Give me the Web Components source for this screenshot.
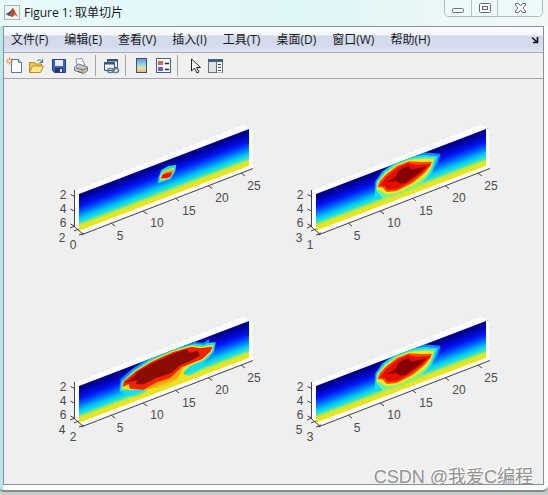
<!DOCTYPE html>
<html lang="zh-CN">
<head>
<meta charset="utf-8">
<title>Figure 1: 取单切片</title>
<style>
html,body{margin:0;height:100%}
body{background:#c9cbcb;font-family:"Open Sans","Noto Sans CJK SC",sans-serif;font-size:12px;color:#16191d}
</style>
</head>
<body>
<figure-window>
  <title-bar slot="title">Figure 1: 取单切片</title-bar>
  <menu-bar slot="menu">
    <menu-entry>文件(F)</menu-entry><menu-entry>编辑(E)</menu-entry><menu-entry>查看(V)</menu-entry><menu-entry>插入(I)</menu-entry><menu-entry>工具(T)</menu-entry><menu-entry>桌面(D)</menu-entry><menu-entry>窗口(W)</menu-entry><menu-entry>帮助(H)</menu-entry>
  </menu-bar>
  <tool-bar slot="tools"></tool-bar>
  <slice-plot blob="small" far="2" near="0"></slice-plot>
  <slice-plot blob="medium" far="3" near="1"></slice-plot>
  <slice-plot blob="large" far="4" near="2"></slice-plot>
  <slice-plot blob="medium" far="5" near="3"></slice-plot>
  <span slot="mark">CSDN @我爱C编程</span>
</figure-window>
<script>
const define = (name, html, setup) => customElements.define(name, class extends HTMLElement {
  constructor() {
    super();
    this.attachShadow({mode: 'open'}).innerHTML = typeof html === 'function' ? html(this) : html;
    if (setup) setup(this);
  }
});

define('figure-window', `<style>
:host{display:flex;flex-direction:column;box-sizing:border-box;height:calc(100vh - 3px);padding:0 4px 5px 3px;
 background:linear-gradient(90deg,#b9e6e8 0,#b9e6e8 3px,#fafcfc 4px);border-bottom:2px solid #868a8a;border-radius:0 0 6px 4px;position:relative}
.client{flex:1;display:flex;flex-direction:column;border:1px solid #8b9092;background:#efefef;min-height:0}
.grid{flex:1;display:grid;grid-template-columns:1fr 1fr;align-content:start;padding:21px 28px 0 37px}
.mark{position:absolute;right:15px;bottom:1px;font:18px/24px "Liberation Sans","Noto Sans CJK SC",sans-serif;color:#929292;text-shadow:-1px -1px 0 #fff;white-space:nowrap}
</style>
<slot name="title"></slot>
<div class="client"><slot name="menu"></slot><slot name="tools"></slot><main class="grid"><slot></slot></main></div>
<div class="mark"><slot name="mark"></slot></div>`);

define('title-bar', `<style>
:host{display:flex;align-items:flex-start;height:26px;margin:0 -4px 0 -3px;background:linear-gradient(90deg,#e9fbfb,#dff6f9 55%,#eaf8f6 80%,#f1f8f6)}
.logo{margin:5px 4px 0 4px;flex:none}
h1{margin:4px 0 0;font:inherit;line-height:18px;flex:1}
.controls{display:flex;height:17px;box-sizing:border-box;border:1px solid #a9bdbf;border-top:0;border-radius:0 0 5px 5px;margin-right:5px}
button{border:0;padding:0;margin:0;background:#edf8f8;display:flex;justify-content:center;align-items:center;width:26px}
button+button{border-left:1px solid #b3c5c7}
button:first-child{border-radius:0 0 0 4px}
button:last-child{width:45px;border-radius:0 0 4px 0}
</style>
<svg class="logo" width="16" height="15" viewBox="0 0 16 15"><rect x=".5" y=".5" width="15" height="14" fill="#f0f4f5" stroke="#abb5b9"/><path d="M1.500 9 6 6.500 9 3 8 11 5 11Z" fill="#3378a5"/><path d="M4 10 6.500 6 9 3 8 12 6 10Z" fill="#5b4256"/><path d="M9 3 11 6 14 12 11 10 8 12 6 10Z" fill="#d8612c"/><path d="M9 3 10 7 9 11 8 12Z" fill="#a63518"/></svg>
<h1><slot></slot></h1>
<div class="controls">
<button aria-label="最小化"><svg width="12" height="15" viewBox="0 0 12 15"><rect x=".5" y="7.500" width="11" height="4" rx="1" fill="#fff" stroke="#6b7578"/></svg></button>
<button aria-label="最大化"><svg width="12" height="15" viewBox="0 0 12 15"><rect x=".5" y="2.500" width="11" height="9" rx="1" fill="#fff" stroke="#636c70"/><rect x="3.500" y="5.500" width="5" height="3" fill="#e7f2f2" stroke="#636c70"/></svg></button>
<button aria-label="关闭"><svg width="13" height="15" viewBox="0 0 13 15"><path d="M1.500 2.500H4.500L6.500 5 8.500 2.500H11.500V4L9 7 11.500 10V11.500H8.500L6.500 9 4.500 11.500H1.500V10L4 7 1.500 4Z" fill="#fff" stroke="#636c70"/></svg></button>
</div>`);

define('menu-bar', `<style>
:host{display:flex;align-items:center;height:26px;box-sizing:border-box;padding:0 4px 0 7px;gap:16px;border-bottom:1px solid #a7a9ae;
background:linear-gradient(#fafcff 0,#f3f6fb 8px,#d3daea 9px,#d5dbed 19px,#dfe4f2 25px)}
.dock{border:0;background:none;padding:0;margin-left:auto;display:flex}
</style><slot></slot>
<button class="dock" aria-label="停靠"><svg width="8" height="8" viewBox="0 0 8 8"><path d="M1 1.500 5.500 5.500M6.500 1V6.500H2" fill="none" stroke="#111" stroke-width="1.600"/></svg></button>`);

define('menu-entry', `<style>:host{display:block}button{font:inherit;color:inherit;line-height:18px;border:0;padding:0;background:none;white-space:nowrap}</style><button><slot></slot></button>`);

const icons = {
 '新建': '<path d="M4.500 1.500h7l3 3v10h-10z" fill="#fbfdff" stroke="#55779f"/><path d="M11.500 1.500v3h3" fill="#c9daef" stroke="#55779f"/><path d="M2.500 -.5v7M-1 3h7M0 .5l5 5M5 .5l-5 5" stroke="#e0793d"/><circle cx="2.500" cy="3" r="1.500" fill="#fff0b0"/>',
 '打开': '<path d="M.5 14.500v-10h5l1 1.500h6v3" fill="#eec455" stroke="#b3872c"/><path d="m.5 14.500 3-6.500h11l-3 6.500z" fill="#ffe583" stroke="#b98d2f"/><path d="M8 3q3-3 5 1M13.500 1.500v3h-3" fill="none" stroke="#486b90"/>',
 '保存': '<path d="M1.500 1.500h13v13h-11l-2-2z" fill="#3e60c0" stroke="#263f8c"/><path d="M4 2h8v6H4z" fill="#e3edfc"/><path d="M4 10h8v4H4z" fill="#23346f"/><path d="M9 11h2v3H9z" fill="#e8edf8"/>',
 '打印': '<path d="m4 7-1-6 6-.5 3 7z" fill="#f8fbff" stroke="#8a969f"/><path d="m1.500 9 4-3 9 3v4l-4 2.500-9-3z" fill="#c6c9cc" stroke="#777d82"/><path d="m3 10 8 2 3-2M4 13l6 2" fill="none" stroke="#646a6e"/><path d="M8 13h3" stroke="#d3b53d" stroke-width="2"/>',
 '链接绘图': '<path d="M4.500 1.500h10v8h-10z" fill="#e9f1f8" stroke="#3a5478"/><path d="M4 2.500h11" stroke="#36527d" stroke-width="2"/><path d="M1.500 4.500h10v8h-10z" fill="#eef4f9" stroke="#3a5478"/><path d="M1 5.500h11" stroke="#36527d" stroke-width="2"/><rect x="4.500" y="10.500" width="6" height="4" rx="2" fill="none" stroke="#667f99" stroke-width="1.500"/><rect x="9.500" y="10.500" width="6" height="4" rx="2" fill="none" stroke="#667f99" stroke-width="1.500"/>',
 '插入颜色栏': '<defs><linearGradient id="bar" x2="0" y2="1"><stop stop-color="#7c8ad6"/><stop offset=".4" stop-color="#86d4e0"/><stop offset=".7" stop-color="#ebe29a"/><stop offset="1" stop-color="#e9ad70"/></linearGradient></defs><rect x="3.500" y=".5" width="10" height="14" fill="url(#bar)" stroke="#36527d"/>',
 '插入图例': '<rect x="1.500" y=".5" width="14" height="14" fill="#fafcff" stroke="#42608a"/><path d="M3 3h5v4H3z" fill="#e2604e"/><path d="M3 9h5v4H3z" fill="#5a6bd8"/><path d="M10 5.500h4M10 11.500h4" stroke="#222" stroke-width="1.500"/>',
 '编辑绘图': '<path d="M6.500 1v12l3-3 2.500 5 2-1-2.500-4.500h4z" fill="#fff" stroke="#222"/>',
 '属性检查器': '<rect x="1.500" y="1.500" width="14" height="13" fill="#e0e3e5" stroke="#68747e"/><path d="M1 2.500h15" stroke="#45617e" stroke-width="3"/><path d="M9.500 4v11" stroke="#68747e"/><path d="M10 4.500h5v10h-5z" fill="#fff"/><path d="M11 6.500h3M11 9.500h3M11 12.500h3" stroke="#444"/>'
};
const tool = n => `<button aria-label="${n}" title="${n}"><svg width="16" height="16" viewBox="0 0 16 16">${icons[n]}</svg></button>`;
define('tool-bar', `<style>
:host{display:flex;align-items:center;height:26px;box-sizing:border-box;border-bottom:1px solid #a5a5a5;background:#f0f0f0}
button{width:22px;height:22px;padding:0;border:0;background:none;display:flex;align-items:center;justify-content:center}
i{width:1px;height:21px;background:#a4a4a4;margin:0 4px 0 3px}
svg{overflow:visible}
</style>${tool('新建')}${tool('打开')}${tool('保存')}${tool('打印')}<i></i>${tool('链接绘图')}<i></i>${tool('插入颜色栏')}${tool('插入图例')}<i></i>${tool('编辑绘图')}${tool('属性检查器')}`);

// Temperature contours, from the coolest ring to the core
const blobs = {
 small: {at: 'translate(-1 15)', soft: 1, rings: [
  ['#19d9e8','354 205 356 187 364 165 385 153 409 149 406 168 392 192 370 200'],
  ['#b8f050','359 197 361 181 372 167 404 157 399 175 386 192'],
  ['#ff9a00','361 192 366 179 378 168 401 164 396 180 384 191'],
  ['#e31500','364 189 369 178 396 171 392 184 380 189']]},
 medium: {at: 'translate(2 15)', soft: 2, rings: [
  ['#0d84ff','285 228 284 202 305 170 345 140 385 122 430 112 482 116 476 140 462 165 430 190 290 235'],
  ['#19dfe6','284 240 289 200 310 170 345 144 385 127 430 120 474 123 466 148 454 178 420 210 360 240 290 255'],
  ['#70ee98','289 226 291 202 315 172 350 147 390 132 430 127 466 127 457 158 444 184 420 212 360 238 310 254 300 240'],
  ['#f4ee16','290 224 294 201 318 173 350 149 390 135 430 132 461 133 453 158 438 182 404 209 350 233 318 238 304 228'],
  ['#ff4b00','293 216 299 199 320 176 352 152 388 139 424 141 456 140 450 155 431 177 397 204 350 228 320 231 309 218'],
  ['#e71100','298 212 320 184 352 158 384 143 410 151 452 146 427 173 394 199 350 223 322 224 314 213'],
  ['#850600','318 202 347 185 358 165 386 152 394 164 421 158 439 156 414 177 396 189 376 204 360 206 349 198']]},
 large: {at: 'translate(-1 18)', soft: 2, rings: [
  ['#0d84ff','238 236 242 207 275 178 325 144 400 112 465 96 490 98 508 86 507 98 528 96 522 130 495 158 430 190 250 245'],
  ['#18ddea','238 242 245 214 280 181 330 147 400 117 465 101 492 104 500 99 526 98 521 126 498 153 480 180 410 222 300 262 262 258'],
  ['#ffe30b','245 238 249 215 284 183 335 151 400 122 455 106 485 110 520 104 516 125 491 150 450 168 428 190 450 200 400 224 290 266 325 238 268 240'],
  ['#ffa300','310 239 350 210 400 185 430 172 412 208 390 222 370 244 350 234'],
  ['#f32000','248 231 252 214 288 184 335 155 400 126 455 110 480 115 517 110 512 124 487 147 425 172 390 204 350 217 310 239 270 236 266 222'],
  ['#8b0800','256 217 280 202 292 186 338 159 400 131 440 117 450 129 472 122 480 136 452 152 420 166 395 188 350 203 310 223 288 222 292 211']]}
};
const line = (x1,y1,x2,y2) => `M${x1} ${y1}L${x2} ${y2}`;
define('slice-plot', el => {
 const b = blobs[el.getAttribute('blob')];
 const label = (x,y,t) => `<text x="${x}" y="${y + 4}">${t}</text>`;
 return `<style>
:host{display:block;min-width:0}
svg{display:block;width:100%;height:auto;overflow:visible}
text{font:12px "Liberation Sans",sans-serif;fill:#4a4a4a;text-anchor:middle}
</style><svg viewBox="0 0 237 192" role="img" aria-label="切片图">
<defs><linearGradient id="jet" x2="0" y2="1"><stop stop-color="#00007c"/><stop offset=".12" stop-color="#00009f"/><stop offset=".34" stop-color="#0014f5"/><stop offset=".5" stop-color="#0060ff"/><stop offset=".68" stop-color="#00cdf5"/><stop offset=".8" stop-color="#38e5c2"/><stop offset=".9" stop-color="#c9e83c"/><stop offset="1" stop-color="#fae100"/></linearGradient>
<linearGradient id="floor" x2="0" y2="1"><stop offset=".78" stop-color="#c9e83c" stop-opacity="0"/><stop offset=".92" stop-color="#e4e628"/><stop offset="1" stop-color="#fae100"/></linearGradient>
<clipPath id="plane"><path d="M38 94 208 29V65L38 131Z"/></clipPath>
<filter id="soft"><feGaussianBlur stdDeviation="${b.soft}"/></filter></defs>
<path d="M34 90 203 24 212 30V68L42 133 34 127Z" fill="#fbfbfb"/>
<path d="M34 90 203 24 212 30V68" fill="none" stroke="#e4e4e4" stroke-dasharray="3 4"/>
<rect width="170" height="36.500" fill="url(#jet)" transform="matrix(1 -.382 0 1 38 94)"/>
<g clip-path="url(#plane)"><g transform="${b.at} scale(.3333)">${b.rings.map(([c,p]) => `<polygon points="${p}" fill="${c}" filter="url(#soft)"/>`).join('')}</g></g>
<rect width="170" height="36.500" fill="url(#floor)" transform="matrix(1 -.382 0 1 38 94)"/>
<path d="${line(33.5,90,33.5,127)}${line(33.5,127,42,134)}${line(40,135,212,68.5)}${[[70,123],[102,111],[134,98],[167,85.5],[200,73]].map(([x,y]) => line(x,y,x+4,y+3)).join('')}${[95.5,110,125].map(y => line(29.5,y-1,33.5,y+1)).join('')}${line(29,128,34,126)}${line(33,131,38,129)}${line(38,135,43,133)}" fill="none" stroke="#444"/>
${label(22,95,2)}${label(22,109,4)}${label(22,123,6)}${label(21,138,el.getAttribute('far'))}${label(32,145,el.getAttribute('near'))}
${label(79,136,5)}${label(116,123,10)}${label(148,111,15)}${label(181,98,20)}${label(213,86,25)}
</svg>`;
});
</script>
</body>
</html>
